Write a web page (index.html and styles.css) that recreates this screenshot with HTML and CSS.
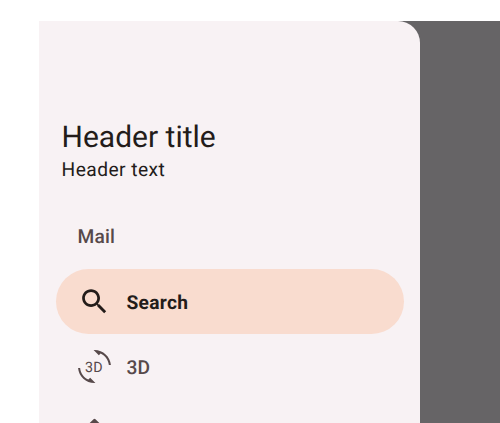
FILE: index.html
```html
<!DOCTYPE html>
<html lang="en">
<head>
<meta charset="utf-8">
<title>Navigation drawer</title>
<link rel="stylesheet" href="styles.css">
</head>
<body>
<div class="stage">
  <div class="frame">
    <aside class="drawer">
      <header class="header">
        <h1 class="title">Header title</h1>
        <p class="subtitle">Header text</p>
      </header>
      <nav class="nav">
        <a class="item item-plain">Mail</a>
        <a class="item active">
          <span class="icon">
            <svg viewBox="0 0 24 24" width="33" height="33"><path fill="currentColor" d="M15.5 14h-.79l-.28-.27C15.41 12.59 16 11.11 16 9.5 16 5.91 13.09 3 9.5 3S3 5.91 3 9.5 5.91 16 9.5 16c1.61 0 3.09-.59 4.23-1.57l.27.28v.79l5 4.99L20.49 19l-4.99-5zm-6 0C7.01 14 5 11.99 5 9.5S7.01 5 9.5 5 14 7.01 14 9.5 11.99 14 9.5 14z"/></svg>
          </span>
          <span>Search</span>
        </a>
        <a class="item">
          <span class="icon">
            <svg viewBox="0 0 24 24" width="33" height="33">
              <path fill="currentColor" d="M7.52 21.48C4.25 19.94 1.91 16.76 1.55 13H.05C.56 19.16 5.71 24 12 24l.66-.03-3.81-3.81-1.33 1.32zM12 0l-.66.03 3.81 3.81 1.33-1.33c3.27 1.55 5.61 4.72 5.96 8.48h1.5C23.44 4.84 18.29 0 12 0z"/>
              <text class="icon-text" x="11.6" y="15.9" text-anchor="middle">3D</text>
            </svg>
          </span>
          <span>3D</span>
        </a>
        <a class="item">
          <span class="icon">
            <svg viewBox="0 0 24 24" width="33" height="33"><path fill="currentColor" d="M21.71 11.29l-9-9a.996.996 0 0 0-1.41 0l-9 9a.996.996 0 0 0 0 1.41l9 9c.39.39 1.02.39 1.41 0l9-9a.996.996 0 0 0 0-1.41z"/></svg>
          </span>
        </a>
      </nav>
    </aside>
    <div class="scrim"></div>
  </div>
</div>
</body>
</html>
```

FILE: styles.css
```css
* { box-sizing: border-box; }
html, body { margin: 0; height: 100%; background: #fff; overflow: hidden; }
.stage { height: 423px; padding: 21px 0 0 39px; overflow: hidden; font-family: Roboto, sans-serif; text-rendering: geometricPrecision; }
.frame { display: flex; width: 461px; height: 402px; background: #666466; }
.drawer {
  width: 381px; height: 480px; flex: none;
  background: #f8f2f4;
  border-top-right-radius: 22px;
  padding: 0 16.5px;
}
.scrim { flex: 1; }
.header { padding: 99px 0 0 6px; height: 180px; color: #231c1a; }
.title { margin: 0; font-size: 30px; line-height: 36px; font-weight: 400; }
.subtitle { margin: 0; font-size: 19.2px; line-height: 28px; font-weight: 400; letter-spacing: .45px; }
.nav { display: flex; flex-direction: column; margin-top: 2px; }
.item {
  display: flex; align-items: center; flex: none;
  height: 65.5px; padding-left: 22px; gap: 16px;
  padding-top: 2px;
  font-size: 19.2px; font-weight: 500; letter-spacing: .14px;
  color: #57494a;
  border-radius: 33px;
}
.active { background: #f9dccf; color: #231c1a; font-weight: 700; letter-spacing: .3px; }
.icon { display: flex; width: 33px; height: 33px; flex: none; margin-top: -2px; }
.icon-text { font-family: Roboto, sans-serif; font-size: 10.4px; font-weight: 400; fill: currentColor; }
```
